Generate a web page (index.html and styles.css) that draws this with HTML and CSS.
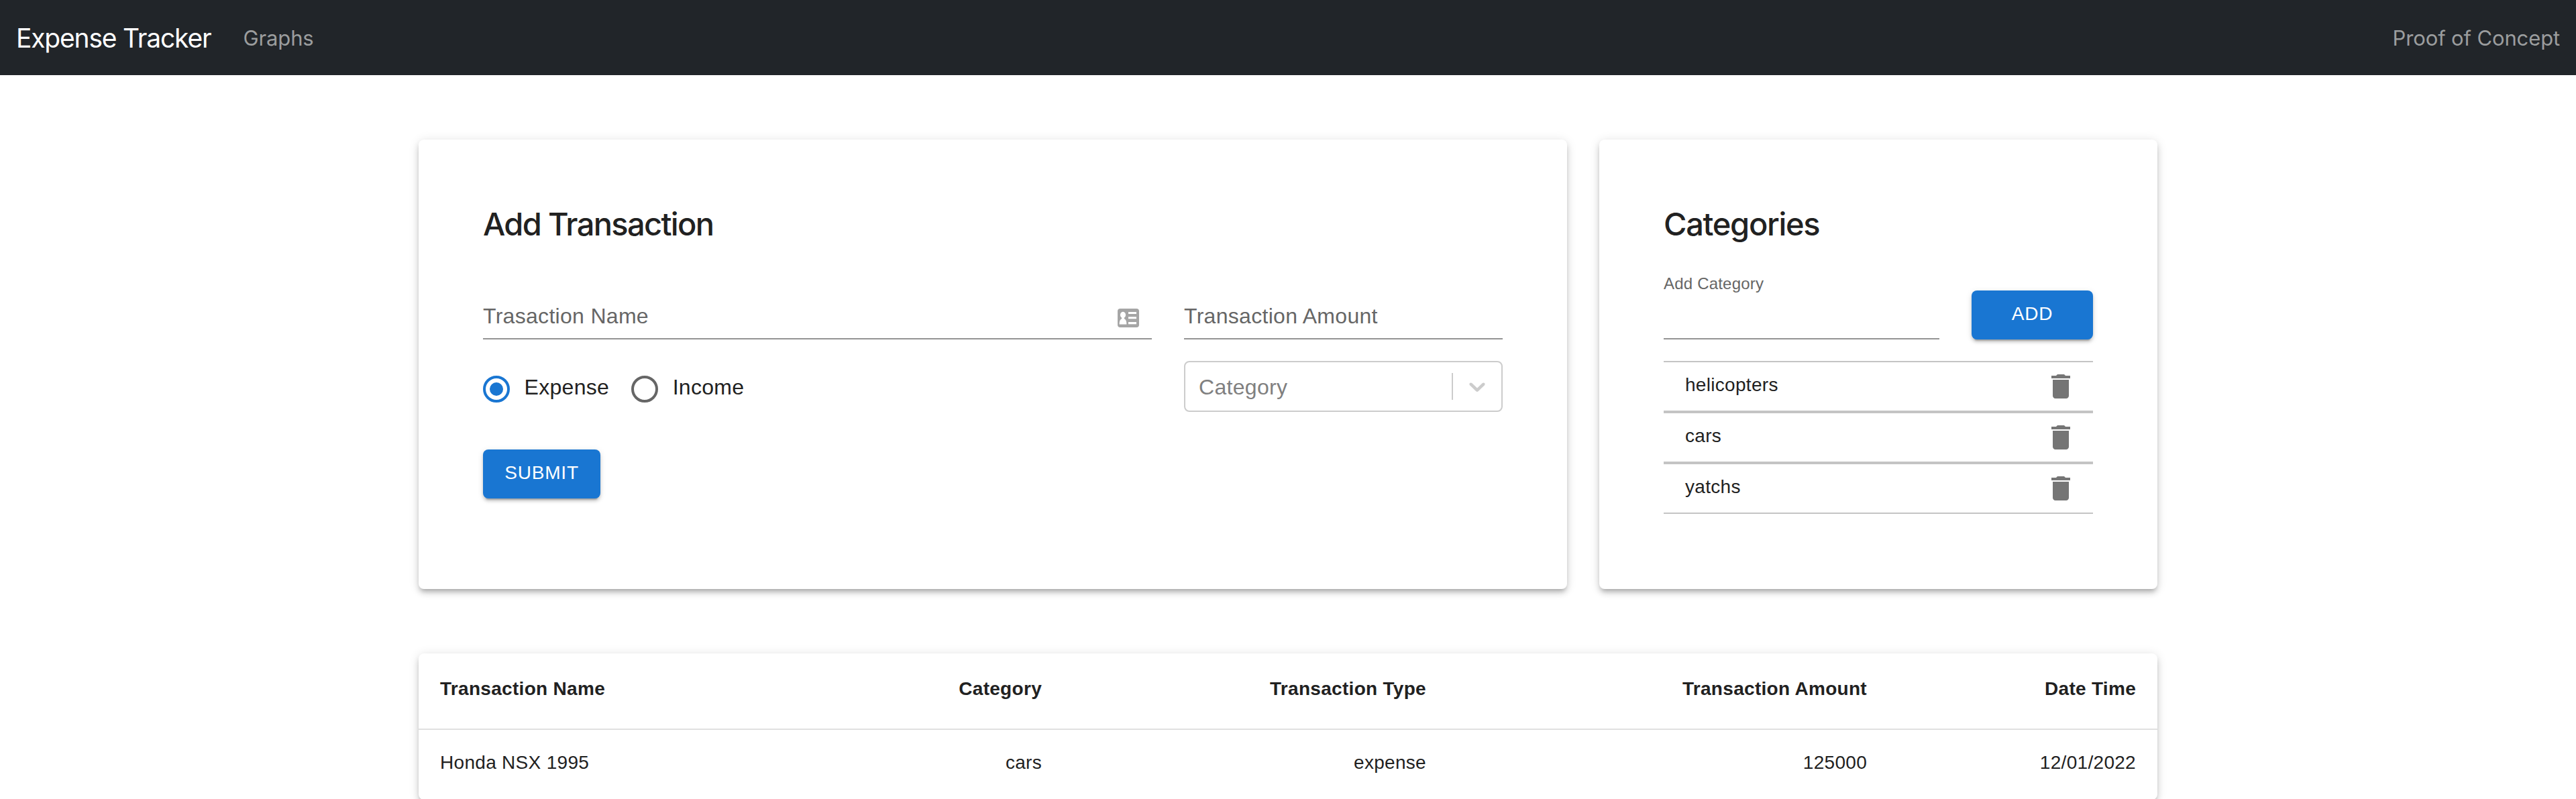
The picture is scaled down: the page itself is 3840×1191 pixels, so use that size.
FILE: index.html
```html
<!DOCTYPE html>
<html lang="en">
<head>
<meta charset="utf-8">
<title>Expense Tracker</title>
<link rel="stylesheet" href="styles.css">
</head>
<body>
<nav class="navbar">
  <a class="brand">Expense Tracker</a>
  <a class="nav-link">Graphs</a>
  <span class="nav-link nav-end">Proof of Concept</span>
</nav>
<main class="page">
  <div class="top-row">
    <section class="card form-card">
      <h2 class="title">Add Transaction</h2>
      <div class="form-grid">
        <div class="field"><span>Trasaction Name</span>
          <svg class="contact" viewBox="0 0 32 28"><rect width="32" height="28" rx="4" fill="#a5a5a5"/><ellipse cx="8" cy="9.400" rx="4.100" ry="4.600" fill="#fff"/><path fill="#fff" d="M6.200 13h3.600v2c2.800 1.200 3.600 4 3.600 8.500H2.600c0-4.500.8-7.300 3.600-8.500zM16 5h12v3H16zM16 12.300h12v3H16zM16 20h12v3.300H16z"/></svg>
        </div>
        <div class="field"><span>Transaction Amount</span></div>
        <div class="radios">
          <svg class="radio" viewBox="0 0 40 40"><circle cx="20" cy="20" r="18" fill="none" stroke="#1976d2" stroke-width="4"/><circle cx="20" cy="20" r="10" fill="#1976d2"/></svg>
          <span class="radio-label">Expense</span>
          <svg class="radio" viewBox="0 0 40 40"><circle cx="20" cy="20" r="18" fill="none" stroke="#666" stroke-width="4"/></svg>
          <span class="radio-label">Income</span>
        </div>
        <div class="select">
          <span class="placeholder">Category</span>
          <i class="separator"></i>
          <svg class="chevron" viewBox="0 0 20 20"><path fill="#ccc" d="M4.516 7.548c0.436-0.446 1.043-0.481 1.576 0l3.908 3.747 3.908-3.747c0.533-0.481 1.141-0.446 1.574 0 0.436 0.445 0.408 1.197 0 1.615-0.406 0.418-4.695 4.502-4.695 4.502-0.217 0.223-0.502 0.335-0.787 0.335s-0.570-0.112-0.789-0.335c0 0-4.287-4.084-4.695-4.502s-0.436-1.170 0-1.615z"/></svg>
        </div>
      </div>
      <button class="btn submit">SUBMIT</button>
    </section>
    <section class="card cat-card">
      <h2 class="title title-cat">Categories</h2>
      <div class="add-row">
        <label class="add-field"><span>Add Category</span></label>
        <button class="btn add">ADD</button>
      </div>
      <ul class="list">
        <li class="item"><span>helicopters</span><svg class="trash" viewBox="0 0 24 24"><path fill="#757575" d="M6 19c0 1.100.9 2 2 2h8c1.100 0 2-.9 2-2V7H6v12zM19 4h-3.500l-1-1h-5l-1 1H5v2h14V4z"/></svg></li>
        <li class="item"><span>cars</span><svg class="trash" viewBox="0 0 24 24"><path fill="#757575" d="M6 19c0 1.100.9 2 2 2h8c1.100 0 2-.9 2-2V7H6v12zM19 4h-3.500l-1-1h-5l-1 1H5v2h14V4z"/></svg></li>
        <li class="item"><span>yatchs</span><svg class="trash" viewBox="0 0 24 24"><path fill="#757575" d="M6 19c0 1.100.9 2 2 2h8c1.100 0 2-.9 2-2V7H6v12zM19 4h-3.500l-1-1h-5l-1 1H5v2h14V4z"/></svg></li>
      </ul>
    </section>
  </div>
  <section class="card table-card">
    <table class="table">
      <colgroup><col class="c1"><col class="c2"><col class="c3"><col class="c4"><col class="c5"></colgroup>
      <thead><tr><th>Transaction Name</th><th>Category</th><th>Transaction Type</th><th>Transaction Amount</th><th>Date Time</th></tr></thead>
      <tbody><tr><td>Honda NSX 1995</td><td>cars</td><td>expense</td><td>125000</td><td>12/01/2022</td></tr></tbody>
    </table>
  </section>
</main>
</body>
</html>
```
FILE: styles.css
```css
* { box-sizing: border-box; }
body {
  margin: 0;
  height: 1191px;
  overflow: hidden;
  background: #fff;
  color: #212121;
  font-family: "Liberation Sans", Arial, sans-serif;
}
.navbar {
  display: flex;
  align-items: center;
  height: 112px;
  padding: 2px 24px 0;
  background: #212529;
  font-family: Inter, sans-serif;
}
.brand { font-size: 39px; line-height: 60px; letter-spacing: -1.2px; color: #fff; margin-right: 48px; }
.nav-link { font-size: 31px; line-height: 48px; letter-spacing: -.13px; color: #9b9d9e; }
.nav-end { margin-left: auto; }
.page { width: 2592px; margin: 96px auto 0; }
.card {
  background: #fff;
  border-radius: 8px;
  box-shadow: 0 6px 6px -4px rgba(0,0,0,.2), 0 6px 8px 0 rgba(0,0,0,.14), 0 2px 16px 0 rgba(0,0,0,.12);
}
.top-row { display: grid; grid-template-columns: 1712px 832px; gap: 48px; height: 670px; }
.form-card, .cat-card { padding: 96px; }
.title {
  margin: 0;
  padding-top: 1px;
  height: 58px;
  font: 500 47px/58px Inter, sans-serif;
  letter-spacing: -1.65px;
}
.title-cat { letter-spacing: -1.3px; }
.form-grid {
  display: grid;
  grid-template-columns: 997px 475px;
  grid-template-rows: 96px 76px;
  column-gap: 48px;
  row-gap: 32px;
  margin-top: 48px;
}
.field {
  display: flex;
  justify-content: space-between;
  padding-top: 38px;
  border-bottom: 2px solid #949494;
  font-size: 32px;
  line-height: 46px;
  letter-spacing: .3px;
  color: #666;
}
.contact { width: 32px; height: 28px; margin: 12px 19px 0 0; }
.radios { display: flex; align-items: center; padding-top: 8px; }
.radio { width: 40px; height: 40px; }
.radio-label { margin: -6px 33px 0 21.5px; font-size: 32px; line-height: 48px; letter-spacing: .3px; }
.select {
  display: flex;
  align-items: center;
  border: 2px solid #ccc;
  border-radius: 8px;
  padding: 0 16px 0 20px;
  font-size: 32px;
  letter-spacing: .3px;
  color: #808080;
}
.placeholder { flex: 1; padding-top: 3px; }
.separator { width: 2px; height: 40px; background: #ccc; }
.chevron { width: 40px; height: 40px; margin-left: 16px; }
.btn {
  display: block;
  height: 73px;
  padding: 0 0 4px;
  border: 0;
  border-radius: 8px;
  background: #1976d2;
  color: #fff;
  font: 28px/49px "Liberation Sans", Arial, sans-serif;
  letter-spacing: .8px;
  box-shadow: 0 6px 2px -4px rgba(0,0,0,.2), 0 4px 4px 0 rgba(0,0,0,.14), 0 2px 10px 0 rgba(0,0,0,.12);
}
.submit { width: 175px; margin-top: 56px; }
.add-row { display: flex; justify-content: space-between; height: 96px; margin-top: 48px; }
.add-field {
  width: 411px;
  border-bottom: 2px solid #949494;
  font-size: 24px;
  line-height: 26px;
  letter-spacing: .2px;
  color: #666;
}
.add { width: 181px; margin-top: 23px; }
.list { list-style: none; margin: 32px 0 0; padding: 0; }
.item {
  display: flex;
  align-items: center;
  justify-content: space-between;
  height: 76px;
  padding: 0 24px 0 32px;
  border: solid #c4c4c4;
  border-width: 2px 0;
  font-size: 28px;
  line-height: 40px;
  letter-spacing: .3px;
}
.item span { margin-top: -5px; }
.trash { width: 48px; height: 48px; }
.table-card { margin-top: 96px; }
.table { width: 100%; table-layout: fixed; border-collapse: separate; border-spacing: 0; font-size: 28px; letter-spacing: .3px; }
.c1 { width: 670px; }
.c2 { width: 291px; }
.c3 { width: 573px; }
.c4 { width: 657px; }
.c5 { width: 401px; }
.table th { padding: 29px 32px 35px; line-height: 48px; text-align: right; border-bottom: 2px solid #e0e0e0; }
.table td { padding: 29px 32px 35px; line-height: 40px; text-align: right; }
.table th:first-child, .table td:first-child { text-align: left; }
```
